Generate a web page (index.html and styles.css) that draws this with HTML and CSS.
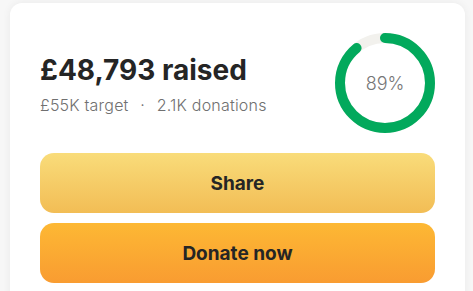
FILE: index.html
```html
<!DOCTYPE html>
<html lang="en">
<head>
    <meta charset="UTF-8">
    <meta name="viewport" content="width=device-width, initial-scale=1.0">
    <title>Donate</title>
    <link rel="stylesheet" href="styles.css">
</head>
<body>
    <div class="card">
        <div class="progress">
            <div class="amounts">
                <h1>£48,793 raised</h1>
                <p class="meta">£55K target <span class="dot">·</span> 2.1K donations</p>
            </div>
            <div class="ring">
                <svg width="100" height="100" viewBox="0 0 100 100">
                    <circle cx="50" cy="50" r="45" fill="none" stroke="#f2f1ed" stroke-width="10"/>
                    <circle cx="50" cy="50" r="45" fill="none" stroke="#02a95c" stroke-width="10"
                        stroke-linecap="round" stroke-dasharray="251.6 282.7" transform="rotate(-90 50 50)"/>
                </svg>
                <span class="percent">89%</span>
            </div>
        </div>
        <div class="actions">
            <button class="btn share">Share</button>
            <button class="btn donate">Donate now</button>
        </div>
    </div>
</body>
</html>
```

FILE: styles.css
```css
body {
    margin: 0;
    background-color: #f7f7f7;
    font-family: Inter, "Noto Sans", sans-serif;
    color: #252525;
}

.card {
    margin: 3px 8px 0 10px;
    padding: 30px 30px 40px;
    background-color: #ffffff;
    border-radius: 12px;
    box-shadow: 0 0 8px rgba(0, 0, 0, 0.06);
}

.progress {
    display: flex;
    justify-content: space-between;
    align-items: center;
}

.amounts {
    padding-top: 4px;
}

.amounts h1 {
    margin: 0;
    font-size: 28px;
    line-height: 32px;
    font-weight: 700;
    letter-spacing: 0;
}

.meta {
    margin: 8px 0 0 0;
    font-size: 16px;
    line-height: 22px;
    color: #707070;
    font-weight: 300;
    letter-spacing: 0.2px;
}

.dot {
    margin: 0 7px;
}

.ring {
    position: relative;
    width: 100px;
    height: 100px;
}

.ring svg {
    display: block;
}

.percent {
    position: absolute;
    top: 0;
    left: 0;
    width: 100%;
    height: 100%;
    display: flex;
    justify-content: center;
    align-items: center;
    font-size: 18px;
    font-weight: 300;
    color: #767676;
}

.actions {
    margin-top: 20px;
    display: flex;
    flex-direction: column;
    gap: 10px;
}

.btn {
    height: 60px;
    border: none;
    border-radius: 14px;
    font-family: inherit;
    font-size: 19px;
    font-weight: 700;
    color: #252525;
    cursor: pointer;
}

.share {
    background: linear-gradient(#f9dc7a, #f2bd55);
}

.donate {
    background: linear-gradient(#fdb834, #f99c31);
}
```
